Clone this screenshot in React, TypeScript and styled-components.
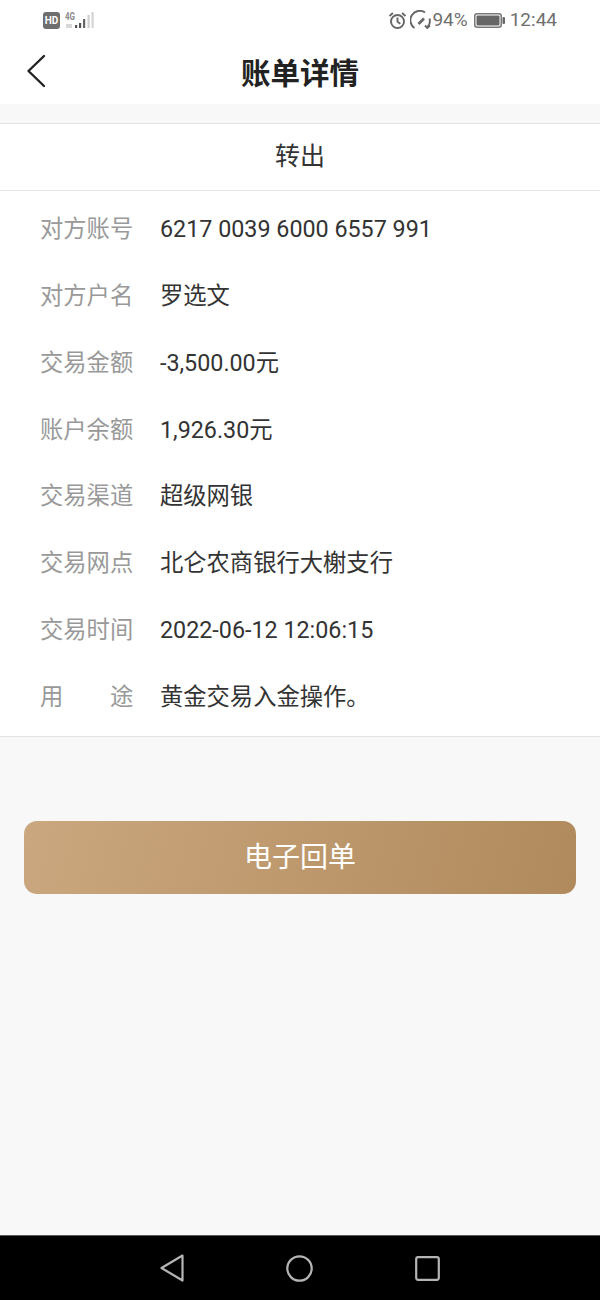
import React from "react";
import styled, { createGlobalStyle } from "styled-components";

const GlobalStyle = createGlobalStyle`
  html, body {
    margin: 0;
    padding: 0;
    background: #f8f8f8;
  }
  * {
    box-sizing: border-box;
  }
`;

const Page = styled.div`
  width: 600px;
  height: 1300px;
  display: flex;
  flex-direction: column;
  background: #f8f8f8;
  font-family: "Roboto", "Noto Sans CJK SC", sans-serif;
`;

const TopArea = styled.div`
  height: 104px;
  flex: none;
  background: #fff;
`;

const StatusBar = styled.div`
  height: 40px;
  display: flex;
  align-items: center;
  justify-content: space-between;
  padding: 0 43px;
`;

const StatusGroup = styled.div`
  display: flex;
  align-items: center;
`;

const HdBadge = styled.span`
  width: 17px;
  height: 17px;
  border-radius: 3px;
  background: #6e6e6e;
  color: #fff;
  font-size: 10px;
  font-weight: 700;
  line-height: 17px;
  text-align: center;
  margin-right: 5px;
`;

const StatusText = styled.span`
  font-size: 19px;
  color: #6f6f6f;
  line-height: 40px;
`;

const Percent = styled(StatusText)`
  margin-right: 6px;
`;

const Clock = styled(StatusText)`
  margin-left: 5px;
`;

const SpeedSlot = styled.span`
  display: flex;
  margin-left: 3px;
`;

const NavBar = styled.div`
  height: 64px;
  position: relative;
  display: flex;
  align-items: center;
  justify-content: center;
`;

const BackButton = styled.span`
  position: absolute;
  left: 26px;
  top: 14px;
  display: flex;
`;

const Title = styled.h1`
  margin: 3px 0 0;
  font-size: 29.5px;
  font-weight: 700;
  line-height: 40px;
  color: #222;
`;

const TypeRow = styled.div`
  margin-top: 19px;
  height: 68px;
  flex: none;
  display: flex;
  align-items: center;
  justify-content: center;
  background: #fff;
  border-top: 1px solid #e2e2e2;
  border-bottom: 1px solid #e6e6e6;
  font-size: 25px;
  line-height: 34px;
  color: #333;
`;

const Details = styled.div`
  flex: none;
  height: 546px;
  padding: 5px 0 6px;
  display: flex;
  flex-direction: column;
  background: #fff;
  border-bottom: 1px solid #e2e2e2;
`;

const Row = styled.div`
  flex: 1;
  display: flex;
  align-items: center;
  padding-left: 40px;
`;

const Label = styled.span`
  width: 93.2px;
  margin-right: 26.8px;
  flex: none;
  display: flex;
  justify-content: space-between;
  font-size: 23.3px;
  line-height: 30px;
  color: #999;
`;

const Value = styled.span`
  font-size: 23.3px;
  line-height: 30px;
  color: #333;
  white-space: nowrap;
`;

const Receipt = styled.button`
  flex: none;
  margin: 84px 24px 0;
  height: 73px;
  border: 0;
  padding: 0;
  border-radius: 13px;
  background: linear-gradient(105deg, #cba77f 0%, #b08a5c 100%);
  color: #fff;
  font-family: inherit;
  font-size: 28px;
  line-height: 34px;
`;

const SoftKeys = styled.div`
  margin-top: auto;
  height: 65px;
  flex: none;
  display: flex;
  align-items: center;
  justify-content: space-between;
  padding: 0 160px;
  background: #000;
  border-top: 1px solid #5a5a5a;
`;

const rows: { label: string[]; value: string }[] = [
  { label: ["对方账号"], value: "6217 0039 6000 6557 991" },
  { label: ["对方户名"], value: "罗选文" },
  { label: ["交易金额"], value: "-3,500.00元" },
  { label: ["账户余额"], value: "1,926.30元" },
  { label: ["交易渠道"], value: "超级网银" },
  { label: ["交易网点"], value: "北仑农商银行大榭支行" },
  { label: ["交易时间"], value: "2022-06-12 12:06:15" },
  { label: ["用", "途"], value: "黄金交易入金操作。" },
];

const SignalIcon = () => (
  <svg width="29" height="18" viewBox="0 0 29 18">
    <text x="0" y="8.5" fontSize="11" fontWeight="700" fill="#8a8a8a" fontFamily="Roboto" textLength="10" lengthAdjust="spacingAndGlyphs">
      4G
    </text>
    <rect x="1" y="13" width="6" height="4" fill="#d8d8d8" />
    <rect x="10" y="14" width="2.2" height="3" fill="#555" />
    <rect x="14" y="12" width="2.2" height="5" fill="#555" />
    <rect x="18" y="8" width="2.2" height="9" fill="#666" />
    <rect x="22.5" y="4" width="2.2" height="13" fill="#cfcfcf" />
    <rect x="26.5" y="1" width="2.2" height="16" fill="#d4d4d4" />
  </svg>
);

const AlarmIcon = () => (
  <svg width="19" height="19" viewBox="0 0 19 19" fill="none" stroke="#666" strokeWidth="1.9">
    <circle cx="9.5" cy="10.5" r="6.5" />
    <path d="M9.5 6.5v4.2l2.8 2M1.5 5l3.4-3M17.5 5l-3.4-3" />
  </svg>
);

const SpeedIcon = () => (
  <svg width="22" height="20" viewBox="0 0 22 20" fill="none" stroke="#666" strokeWidth="1.9">
    <path d="M4.5 18A9 9 0 0 1 15 2.5" />
    <path d="M19.5 8.5A9 9 0 0 1 17.5 17" />
    <path d="M8.5 14l5.5-5.5" strokeWidth="2.6" />
    <path d="M15 15.5l2.3 2.5 2.7-2.5" />
  </svg>
);

const BatteryIcon = () => (
  <svg width="31" height="15" viewBox="0 0 31 15">
    <rect x="0.75" y="0.75" width="26.5" height="13.5" rx="2.5" fill="none" stroke="#777" strokeWidth="1.5" />
    <rect x="2.5" y="2.5" width="23" height="10" rx="1" fill="#666" />
    <rect x="28.5" y="4" width="2.5" height="7" rx="1" fill="#666" />
  </svg>
);

const App: React.FC = () => {
  return (
    <Page>
      <GlobalStyle />
      <TopArea>
        <StatusBar>
          <StatusGroup>
            <HdBadge>HD</HdBadge>
            <SignalIcon />
          </StatusGroup>
          <StatusGroup>
            <AlarmIcon />
            <SpeedSlot>
              <SpeedIcon />
            </SpeedSlot>
            <Percent>94%</Percent>
            <BatteryIcon />
            <Clock>12:44</Clock>
          </StatusGroup>
        </StatusBar>
        <NavBar>
          <BackButton>
            <svg width="20" height="34" viewBox="0 0 20 34" fill="none" stroke="#222" strokeWidth="2.4" strokeLinecap="round" strokeLinejoin="round">
              <path d="M18 2 2.5 17 18 32" />
            </svg>
          </BackButton>
          <Title>账单详情</Title>
        </NavBar>
      </TopArea>
      <TypeRow>转出</TypeRow>
      <Details>
        {rows.map((row) => (
          <Row key={row.value}>
            <Label>
              {row.label.map((part) => (
                <span key={part}>{part}</span>
              ))}
            </Label>
            <Value>{row.value}</Value>
          </Row>
        ))}
      </Details>
      <Receipt>电子回单</Receipt>
      <SoftKeys>
        <svg width="24" height="28" viewBox="0 0 24 28" fill="none" stroke="#b4b4b4" strokeWidth="2.2" strokeLinejoin="round">
          <path d="M22.5 1.5 1.5 14l21 12.5z" />
        </svg>
        <svg width="27" height="27" viewBox="0 0 27 27" fill="none" stroke="#b4b4b4" strokeWidth="2.2">
          <circle cx="13.5" cy="13.5" r="12.2" />
        </svg>
        <svg width="25" height="25" viewBox="0 0 25 25" fill="none" stroke="#b4b4b4" strokeWidth="2.2">
          <rect x="1.2" y="1.2" width="22.6" height="22.6" rx="2" />
        </svg>
      </SoftKeys>
    </Page>
  );
};

export default App;
